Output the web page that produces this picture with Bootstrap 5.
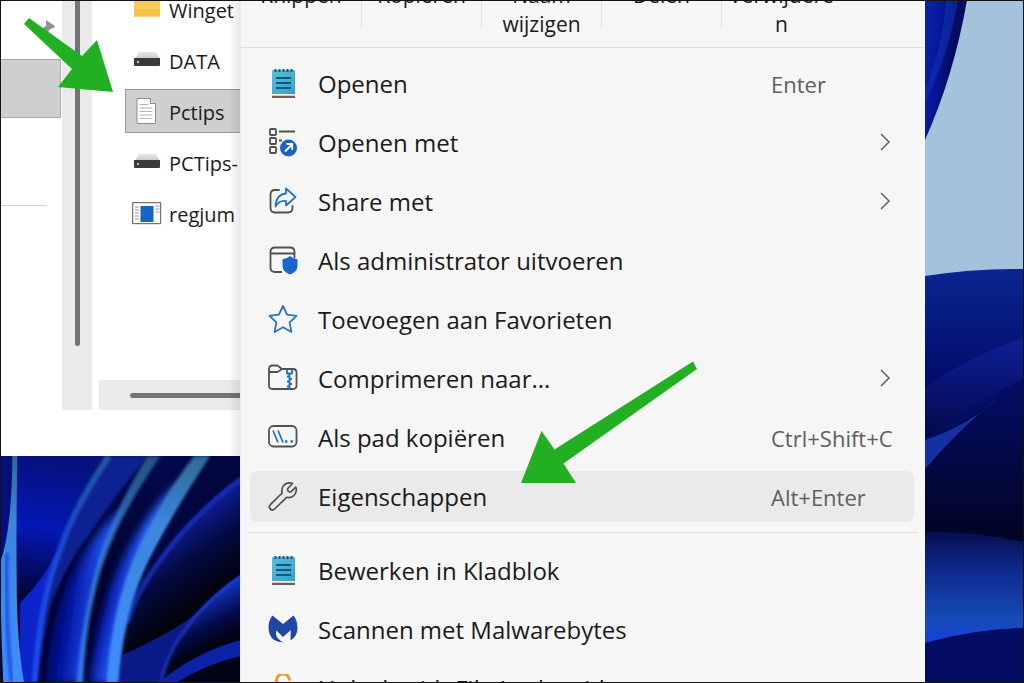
<!DOCTYPE html>
<html lang="nl">
<head>
<meta charset="utf-8">
<meta name="viewport" content="width=device-width, initial-scale=1">
<title>Contextmenu</title>
<link href="https://cdn.jsdelivr.net/npm/bootstrap@5.3.0/dist/css/bootstrap.min.css" rel="stylesheet">
<style>
body { font-family: "Open Sans", "Noto Sans", sans-serif; color: #1b1b1b; }
.desktop { height: 100vh; border: 1px solid #141014; background: #020a50; }
.side-left { width: 239px; }
.side-right { width: 98px; }
.explorer { background: #fff; height: 455px; }
.tree { width: 61px; }
.tree-pin { margin: 18px 6px 0 auto; width: 16px; height: 16px; }
.tree-selected { margin: 24px 1px 0 0; height: 59px; background: #cfcfcf; border: 1px solid #a8a8a8; border-left: 0; }
.tree-line { margin-top: 87px; width: 46px; height: 1px; background: #cfcfcf; }
.vbar { width: 30px; background: #eaeaea; margin-bottom: 46px; }
.vthumb { width: 5px; height: 345px; background: #747474; border-radius: 0 0 3px 3px; }
.files { margin-top: -14px; gap: 7px; padding-left: 33px; }
.file { height: 44px; gap: 7px; padding: 0 0 0 6px; border: 1px solid transparent; border-right: 0; background: none; font-size: 20px; line-height: 24px; color: #1b1b1b; text-align: left; }
.file span { padding-top: 3px; }
.file.selected { background: #cfcfcf; border-color: #999; }
.file svg { width: 30px; height: 30px; flex: none; }
.hbar { height: 30px; background: #eaeaea; margin: 0 0 46px 7px; padding-left: 31px; }
.hthumb { height: 5px; background: #747474; border-radius: 3px 0 0 3px; }
.menu-shade { top: 0; right: 0; width: 12px; height: 455px; background: linear-gradient(90deg, transparent, rgba(0,0,0,.09)); }
.wall-left { min-height: 0; }
.ctx { background: #f6f6f6; border-left: 1px solid #ececec; }
.tools { height: 47px; border-bottom: 1px solid #dfdfdf; }
.tool-row { height: 66px; }
.tool { flex: 0 0 120px; height: 58px; border: 0; background: none; padding: 0; font-size: 21px; line-height: 29px; color: #1b1b1b; }
.tool + .tool { border-left: 1px solid; border-image: linear-gradient(#dedede 45px, transparent 45px) 1; }
.entries { padding: 0 11px 0 9px; gap: 8px; }
.entries-first { padding-top: 10px; }
.entry { height: 51px; border: 0; border-radius: 7px; background: none; padding: 0 18px; gap: 20px; font-size: 24px; line-height: 32px; color: #1b1b1b; text-align: left; }
.entry.active-entry { background: #eaeaea; }
.entry > svg.ico { width: 30px; height: 30px; flex: none; }
.keys { width: 125px; font-size: 22px; color: #5f5f5f; }
.chev { width: 13px; height: 20px; margin-right: 5px; }
.split { border-top: 1px solid #dfdfdf; margin: 10px 7px 12px; }
.arrow-a { left: 22px; top: 16px; width: 92px; height: 78px; z-index: 3; }
.arrow-b { left: 270px; bottom: 38px; width: 177px; height: 123px; z-index: 3; }
</style>
</head>
<body>
<svg width="0" height="0" class="position-absolute" aria-hidden="true">
  <defs>
    <linearGradient id="pad" x1="0" y1="0" x2="1" y2="1"><stop offset="0" stop-color="#58bfdf"/><stop offset="1" stop-color="#35a0c8"/></linearGradient>
    <linearGradient id="dr" x1="0" y1="0" x2="0" y2="1"><stop offset="0" stop-color="#e6e6e6"/><stop offset="1" stop-color="#c8c8c8"/></linearGradient>
    <symbol id="notepad" viewBox="0 0 30 30">
      <path d="M4 25h23v4H4z" fill="#7a5a50"/><path d="M4 24.500h23v2.300H4z" fill="#f3e9e2"/>
      <path d="M5 1h21q1 0 1 1v23H4V2q0-1 1-1z" fill="url(#pad)"/>
      <path d="M7.500 0v3M11.500 0v3M15.500 0v3M19.500 0v3M23.500 0v3" stroke="#1f5670" stroke-width="2"/>
      <path d="M8 9h15M8 14h15M8 19h15" stroke="#15577b" stroke-width="1.800"/>
    </symbol>
    <symbol id="drive" viewBox="0 0 30 30">
      <path d="M7 7h17l4 7H3z" fill="url(#dr)"/><path d="M2 13h26v7q0 1-1 1H3q-1 0-1-1z" fill="#3a3a3a"/><circle cx="6" cy="17" r="1.200" fill="#bdbdbd"/>
    </symbol>
  </defs>
</svg>
<div class="desktop d-flex overflow-hidden position-relative">
  <aside class="side-left flex-shrink-0 d-flex flex-column position-relative">
    <div class="explorer d-flex flex-shrink-0 overflow-hidden">
      <div class="tree flex-shrink-0">
        <svg class="tree-pin d-block" viewBox="0 0 16 16"><path d="M6 1l9 6-1 2-4 1-3 5-6-5 5-3z" fill="#8b93a0"/></svg>
        <div class="tree-selected"></div>
        <div class="tree-line"></div>
      </div>
      <div class="vbar flex-shrink-0 d-flex justify-content-center"><div class="vthumb"></div></div>
      <div class="flex-grow-1 d-flex flex-column justify-content-between overflow-hidden">
        <div class="files d-flex flex-column">
          <button class="file d-flex align-items-center"><svg viewBox="0 0 30 30"><path d="M2 2h12l2 3h12v17.500H2z" fill="#f9cb58"/><path d="M2 15h26v7.500H2z" fill="#f7c04a"/></svg><span>Winget</span></button>
          <button class="file d-flex align-items-center"><svg><use href="#drive"/></svg><span>DATA</span></button>
          <button class="file selected d-flex align-items-center"><svg viewBox="0 0 30 30"><path d="M5 2.500h13.500l5 5v20H5z" fill="#fff" stroke="#8b8b8b"/><path d="M18.500 2.500v5h5" fill="#e3e3e3" stroke="#8b8b8b"/><path d="M7.500 8.500h9M7.500 12h13M7.500 15.500h13M7.500 19h13M7.500 22.500h13" stroke="#b4b4b4"/></svg><span>Pctips</span></button>
          <button class="file d-flex align-items-center"><svg><use href="#drive"/></svg><span>PCTips-</span></button>
          <button class="file d-flex align-items-center"><svg viewBox="0 0 30 30"><path d="M.7 4.700h28v21H.7z" fill="#fff" stroke="#555"/><path d="M8.500 8h13v16h-13z" fill="#1565c4"/><path d="M3 9h4M3 12h4M3 15h4M3 18h4M3 21h4M23.500 8h4M23.500 11h4M23.500 14h4" stroke="#9a9a9a"/></svg><span>regjum</span></button>
        </div>
        <div class="hbar d-flex flex-column justify-content-center"><div class="hthumb"></div></div>
      </div>
    </div>
    <div class="menu-shade position-absolute"></div>
    <svg class="wall-left flex-grow-1 w-100 d-block" viewBox="3 50 714 676" preserveAspectRatio="none">
      <defs>
        <linearGradient id="a1" gradientUnits="userSpaceOnUse" x1="150" y1="50" x2="80" y2="480"><stop offset="0" stop-color="#06107c"/><stop offset=".5" stop-color="#0318b4"/><stop offset="1" stop-color="#010330"/></linearGradient>
        <linearGradient id="a2" gradientUnits="userSpaceOnUse" x1="0" y1="50" x2="0" y2="726"><stop offset="0" stop-color="#2e6a94"/><stop offset=".3" stop-color="#3c86dc"/><stop offset="1" stop-color="#3f8cff"/></linearGradient>
        <linearGradient id="a3" gradientUnits="userSpaceOnUse" x1="0" y1="50" x2="0" y2="726"><stop offset="0" stop-color="#225a9c"/><stop offset=".35" stop-color="#1a48d0"/><stop offset="1" stop-color="#1c4cf4"/></linearGradient>
        <linearGradient id="a4" gradientUnits="userSpaceOnUse" x1="130" y1="600" x2="265" y2="620"><stop offset="0" stop-color="#01045c"/><stop offset=".5" stop-color="#0414a0"/><stop offset="1" stop-color="#1f50f4"/></linearGradient>
        <linearGradient id="a6" gradientUnits="userSpaceOnUse" x1="250" y1="560" x2="370" y2="590"><stop offset="0" stop-color="#01045c"/><stop offset=".4" stop-color="#0618b4"/><stop offset="1" stop-color="#2a68ff"/></linearGradient>
        <linearGradient id="a5" gradientUnits="userSpaceOnUse" x1="550" y1="240" x2="680" y2="420"><stop offset="0" stop-color="#0c1e98"/><stop offset=".5" stop-color="#030a40"/><stop offset="1" stop-color="#01030f"/></linearGradient>
        <linearGradient id="a7" gradientUnits="userSpaceOnUse" x1="600" y1="480" x2="660" y2="600"><stop offset="0" stop-color="#1230b8"/><stop offset=".6" stop-color="#030a48"/><stop offset="1" stop-color="#010316"/></linearGradient>
        <linearGradient id="a8" gradientUnits="userSpaceOnUse" x1="0" y1="50" x2="0" y2="400"><stop offset="0" stop-color="#020950"/><stop offset="1" stop-color="#01032c"/></linearGradient>
        <filter id="bl"><feGaussianBlur stdDeviation="4"/></filter>
        <filter id="bm" x="-30%" y="-10%" width="160%" height="120%"><feGaussianBlur stdDeviation="12"/></filter>
      </defs>
      <path d="M0 50H720V730H0z" fill="#010316"/>
      <path d="M0 50H340V730H0z" fill="url(#a1)"/>
      <path d="M0 50H38Q38 250 0 360z" fill="#03107c"/>
      <path d="M60 490Q130 420 175 330L150 500 112 730H60z" fill="#0b24cc"/>
      <path d="M325 50H720V300L370 730H104Q125 520 175 360 235 190 325 50z" fill="url(#a8)"/>
      <path d="M325 50H440Q330 190 270 280 200 370 150 500L106 730 104 726Q125 520 175 360 235 190 325 50z" fill="#0a2090" filter="url(#bl)"/>
      <path d="M325 50Q220 210 180 330 120 480 104 726" fill="none" stroke="url(#a3)" stroke-width="18" filter="url(#bl)"/>
      <path d="M370 200Q230 330 175 500 145 600 135 730H245Q255 560 290 420 330 290 370 200z" fill="url(#a4)" filter="url(#bm)"/>
      <path d="M465 50Q390 150 350 250 300 350 275 470 250 570 245 730H370L500 300 585 50z" fill="url(#a8)"/>
      <path d="M440 50H480Q390 180 345 280 300 380 280 480 255 590 249 730H228Q240 590 262 490 290 340 340 240 380 150 440 50z" fill="url(#a2)" opacity=".75" filter="url(#bl)"/>
      <path d="M520 140Q390 280 330 440 280 600 268 730H350Q355 560 420 400L560 130z" fill="url(#a6)" filter="url(#bm)"/>
      <path d="M628 50H720V120Q540 240 450 390L375 560Q400 430 480 290 540 170 628 50z" fill="#020640"/>
      <path d="M720 110Q560 230 455 385 400 470 368 585L355 730H720z" fill="url(#a5)"/>
      <path d="M720 120Q560 238 455 395 405 465 380 550" fill="none" stroke="#142cae" stroke-width="14" filter="url(#bl)"/>
      <path d="M365 645Q590 550 720 402V730H353z" fill="#0a1a88"/>
      <path d="M720 405Q610 480 550 570 500 640 480 730H720z" fill="url(#a7)"/>
      <path d="M720 410Q610 485 550 575 500 640 482 726" fill="none" stroke="#1a3bd0" stroke-width="8" filter="url(#bl)"/>
      <path d="M490 715Q600 630 720 600V648Q620 670 530 726H480z" fill="#0c22a4"/>
      <path d="M580 50H628Q510 230 440 370 370 520 353 730H318Q328 600 352 500 390 350 460 240 510 140 580 50z" fill="url(#a2)" filter="url(#bl)"/>
      <path d="M37 50H52Q48 250 50 430 50 600 72 730H10Q0 520 3 360 35 270 37 50z" fill="url(#a2)"/>
      <path d="M20 340Q15 540 35 726" fill="none" stroke="#1f55e8" stroke-width="12" filter="url(#bl)"/>
    </svg>
    <svg class="arrow-a position-absolute" viewBox="23 17 92 78"><path d="M29 18L82 56 97 40 113 92 58 87 72 69 24 24z" fill="#22b022"/></svg>
  </aside>

  <main class="ctx flex-grow-1 overflow-hidden">
    <div class="tools d-flex flex-column justify-content-end overflow-hidden">
      <div class="tool-row d-flex flex-shrink-0 align-items-start">
        <button class="tool">Knippen<br>&nbsp;</button>
        <button class="tool">Kopiëren<br>&nbsp;</button>
        <button class="tool">Naam<br>wijzigen</button>
        <button class="tool">Delen<br>&nbsp;</button>
        <button class="tool">Verwijdere<br>n</button>
      </div>
    </div>
    <div class="entries entries-first d-flex flex-column">
      <button class="entry d-flex align-items-center"><svg class="ico"><use href="#notepad"/></svg><span class="flex-grow-1">Openen</span><span class="keys">Enter</span></button>
      <button class="entry d-flex align-items-center"><svg class="ico" viewBox="0 0 30 30" fill="none" stroke="#505050" stroke-width="1.800"><rect x="2" y="1" width="6" height="6" rx="1"/><rect x="2" y="10" width="6" height="6" rx="1"/><rect x="2" y="19" width="6" height="6" rx="1"/><path d="M11 3.500h16M11 12.500h3"/><circle cx="20.500" cy="20" r="8.500" fill="#1a62c6" stroke="none"/><path d="M17 23.500l7-7M18.500 16h5.700v5.700" stroke="#fff" stroke-width="1.800"/></svg><span class="flex-grow-1">Openen met</span><svg class="chev" viewBox="0 0 13 20" fill="none" stroke="#666" stroke-width="1.600"><path d="M3 1l8 8-8 8"/></svg></button>
      <button class="entry d-flex align-items-center"><svg class="ico" viewBox="0 0 30 30" fill="none" stroke="#505050" stroke-width="1.800" stroke-linejoin="round"><path d="M11 3H7Q2.500 3 2.500 7.500v13.500Q2.500 25.500 7 25.500h13q4.500 0 4.500-4.500V19" stroke-linecap="round"/><path d="M18 1.500l9.500 8.500-9.500 8.500V14Q11 13 7.500 19.500 8 7.500 18 6.500z" stroke="#2a74c4"/></svg><span class="flex-grow-1">Share met</span><svg class="chev" viewBox="0 0 13 20" fill="none" stroke="#666" stroke-width="1.600"><path d="M3 1l8 8-8 8"/></svg></button>
      <button class="entry d-flex align-items-center"><svg class="ico" viewBox="0 0 30 30" fill="none" stroke="#505050" stroke-width="1.800"><path d="M14 26H7Q2.500 26 2.500 21.500V6Q2.500 1.500 7 1.500h15q4.500 0 4.500 4.500V12M2.500 7.500h24"/><path d="M22 10q3.500 3.200 7.500 3.200v6.500q0 6-7.500 8.800-7.500-2.800-7.500-8.800v-6.500q4 0 7.500-3.200z" fill="#1a66d0" stroke="none"/></svg><span class="flex-grow-1">Als administrator uitvoeren</span></button>
      <button class="entry d-flex align-items-center"><svg class="ico" viewBox="0 0 30 30" fill="none" stroke="#2a74b8" stroke-width="1.800" stroke-linejoin="round"><path d="M15 1l4.100 8.700 9.400 1.200-6.900 6.500 1.800 9.600L15 22.300l-8.400 4.700 1.800-9.600-6.900-6.500 9.400-1.200z"/></svg><span class="flex-grow-1">Toevoegen aan Favorieten</span></button>
      <button class="entry d-flex align-items-center"><svg class="ico" viewBox="0 0 30 30" fill="none" stroke="#505050" stroke-width="1.800" stroke-linejoin="round"><path d="M1 8V5q0-3.500 3.500-3.500h5L14 5h11q3.500 0 3.500 3.500v13Q28.500 25 25 25H4.500Q1 25 1 21.500zM1 8h8.500L14 5"/><path d="M19 5v4.500h5V5M21.500 10v15M19 12.500h2.500M21.500 15H24M19 17.500h2.500M21.500 20H24M19 22.500h2.500" stroke="#1d6fb8"/></svg><span class="flex-grow-1">Comprimeren naar...</span><svg class="chev" viewBox="0 0 13 20" fill="none" stroke="#666" stroke-width="1.600"><path d="M3 1l8 8-8 8"/></svg></button>
      <button class="entry d-flex align-items-center"><svg class="ico" viewBox="0 0 30 30" fill="none" stroke="#505050" stroke-width="1.800"><rect x="1" y="3" width="27.500" height="20.500" rx="4.500"/><path d="M5 7.500l5 12M10 7.500l5 12" stroke="#2a74b8"/><path d="M17 18.500h2.400M22.500 18.500h2.400" stroke="#2a74b8" stroke-width="2.400"/></svg><span class="flex-grow-1">Als pad kopiëren</span><span class="keys text-nowrap">Ctrl+Shift+C</span></button>
      <button class="entry active-entry d-flex align-items-center position-relative"><svg class="ico" viewBox="0 0 30 30" fill="none" stroke="#505050" stroke-width="1.700" stroke-linejoin="round"><path d="M24.500 1.500Q19.500-.5 15.800 3.300 13 6.500 14.200 11L2.300 22.700q-2 2.300 0 4.300 2.200 2 4.300 0l12-11.700q4 1.200 7.200-1.700 3.700-3.600 2-8.600L23 9.800q-1.500.6-2.700-.6-1-1.200-.5-2.700z"/></svg><span class="flex-grow-1">Eigenschappen</span><span class="keys">Alt+Enter</span>
        <svg class="arrow-b position-absolute" viewBox="520 360 177 123"><path d="M693 360.500L697 368 563.500 462.500 576 482H521L541.500 430 554.500 448.500z" fill="#22b022"/></svg>
      </button>
    </div>
    <div class="split"></div>
    <div class="entries d-flex flex-column">
      <button class="entry d-flex align-items-center"><svg class="ico"><use href="#notepad"/></svg><span class="flex-grow-1">Bewerken in Kladblok</span></button>
      <button class="entry d-flex align-items-center"><svg class="ico" viewBox="0 0 30 30"><path d="M4.500 0.500L15 9 25.500.5Q29.500 5.500 29.500 13 29.500 21 22.500 25.500L22.800 15l-7.800 7-6.500-6.500Q6 23 15.500 27.400 5 27.500 1.500 19-1.500 8 4.500.5z" fill="#2048a0"/></svg><span class="flex-grow-1">Scannen met Malwarebytes</span></button>
      <button class="entry d-flex align-items-center"><svg class="ico" viewBox="0 0 30 30"><path d="M8.500 14V6.500a6.500 6.500 0 0 1 13 0" fill="none" stroke="#ec9a2c" stroke-width="3"/><rect x="5" y="13" width="20" height="15" rx="3" fill="#ec9a2c"/></svg><span class="flex-grow-1">Unlock with File Locksmith</span></button>
    </div>
  </main>

  <aside class="side-right flex-shrink-0">
    <svg class="w-100 h-100 d-block" viewBox="925 1 98 681" preserveAspectRatio="none">
      <defs>
        <linearGradient id="r1" x1="0" y1="0" x2=".7" y2=".25"><stop offset="0" stop-color="#0a24a8"/><stop offset=".5" stop-color="#0618a0"/><stop offset="1" stop-color="#030c60"/></linearGradient>
        <linearGradient id="r2" x1="0" y1="0" x2="0" y2="1"><stop offset="0" stop-color="#0a2690"/><stop offset=".25" stop-color="#030e6c"/><stop offset=".6" stop-color="#020a50"/></linearGradient>
        <linearGradient id="r3" x1="0" y1="0" x2="0" y2="1"><stop offset="0" stop-color="#0e1f98"/><stop offset="1" stop-color="#030848"/></linearGradient>
        <linearGradient id="r4" x1="0" y1="0" x2="0" y2="1"><stop offset="0" stop-color="#060e50"/><stop offset=".35" stop-color="#0e2a8c"/><stop offset=".8" stop-color="#164cb8"/><stop offset="1" stop-color="#1540e0"/></linearGradient>
        <linearGradient id="r5" x1="0" y1="0" x2="0" y2="1"><stop offset="0" stop-color="#040d68"/><stop offset="1" stop-color="#010420"/></linearGradient>
      </defs>
      <path d="M925 0h99v300h-99z" fill="#a5c2dc"/>
      <path d="M925 0H967Q954 75 925 140z" fill="url(#r1)"/>
      <path d="M958 0Q950 50 925 103V90Q942 50 946 0z" fill="#1130b4" opacity=".6"/>
      <path d="M925 276Q975 268 1024 269V683H925z" fill="url(#r2)"/>
      <path d="M925 388Q970 355 1024 338V378Q975 402 925 440z" fill="url(#r3)"/>
      <path d="M925 440Q965 424 1024 378V545H925z" fill="url(#r5)"/>
      <path d="M925 440Q970 425 1000 396 960 428 925 469z" fill="#1430a4"/>
      <path d="M925 532Q975 531 1024 542V628Q970 630 925 643z" fill="url(#r4)"/>
      <path d="M925 643Q970 630 1024 628V683H925z" fill="#030c60"/>
    </svg>
  </aside>
</div>
<script src="https://cdn.jsdelivr.net/npm/bootstrap@5.3.0/dist/js/bootstrap.bundle.min.js"></script>
</body>
</html>
